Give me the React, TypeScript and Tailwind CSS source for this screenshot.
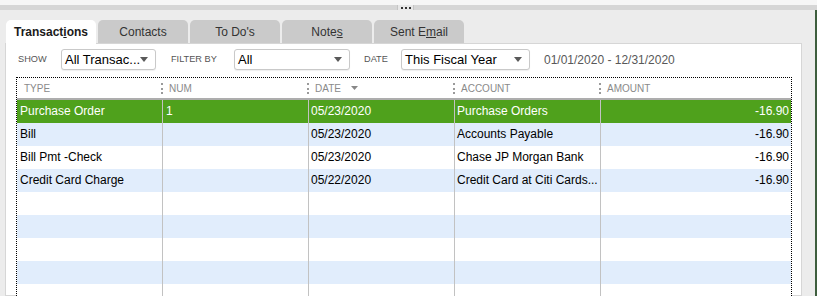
import type { ReactNode } from 'react';

const font = { fontFamily: '"Liberation Sans", Arial, sans-serif' };

type Row = { type: string; num: string; date: string; account: string; amount: string };

const rows: Row[] = [
  { type: 'Purchase Order', num: '1', date: '05/23/2020', account: 'Purchase Orders', amount: '-16.90' },
  { type: 'Bill', num: '', date: '05/23/2020', account: 'Accounts Payable', amount: '-16.90' },
  { type: 'Bill Pmt -Check', num: '', date: '05/23/2020', account: 'Chase JP Morgan Bank', amount: '-16.90' },
  { type: 'Credit Card Charge', num: '', date: '05/22/2020', account: 'Credit Card at Citi Cards...', amount: '-16.90' },
  { type: '', num: '', date: '', account: '', amount: '' },
  { type: '', num: '', date: '', account: '', amount: '' },
  { type: '', num: '', date: '', account: '', amount: '' },
  { type: '', num: '', date: '', account: '', amount: '' },
  { type: '', num: '', date: '', account: '', amount: '' },
];

const Caret = () => (
  <svg width="8" height="5" viewBox="0 0 8 5" className="shrink-0">
    <path d="M0 0h8L4 5z" fill="#5a5a5a" />
  </svg>
);

const Select = ({ label, width }: { label: string; width: string }) => (
  <div
    className={`${width} h-[21px] shrink-0 flex items-center justify-between pl-[3px] pr-[7px] bg-white border border-[#c9c9c9] rounded-[3px] shadow-[0_1px_1px_rgba(0,0,0,0.07)] text-[13px] text-black`}
  >
    <span className="whitespace-nowrap">{label}</span>
    <Caret />
  </div>
);

const Label = ({ children, width }: { children: ReactNode; width: string }) => (
  <span className={`${width} shrink-0 text-[9.2px] text-[#555] uppercase whitespace-nowrap`}>{children}</span>
);

const Grip = () => <div className="w-[2px] h-[11px] border-l-2 border-dotted border-[#9a9a9a]" />;

const Tab = ({ children, active }: { children: ReactNode; active?: boolean }) => (
  <div
    className={`w-[90px] rounded-t-[5px] flex items-center justify-center text-[12px] ${
      active ? 'bg-white font-bold text-[#1a1a1a] relative z-10 -mb-px h-[24px]' : 'bg-[#cacaca] text-[#333] h-[23px]'
    }`}
  >
    {children}
  </div>
);

export default function App() {
  return (
    <div className="w-[817px] h-[296px] overflow-hidden bg-[#ececec] flex flex-col" style={font}>
      <div className="h-[5px] bg-[#f6f6f6] shrink-0" />
      <div className="h-[5px] bg-[#d6d6d6] shrink-0 flex">
        <div className="ml-[397px] w-[17px] h-full bg-[#e8e8e8] border-x border-[#c4c4c4] flex items-center justify-center gap-[2px]">
          <span className="w-[2px] h-[2px] bg-[#333]" />
          <span className="w-[2px] h-[2px] bg-[#333]" />
          <span className="w-[2px] h-[2px] bg-[#333]" />
        </div>
      </div>
      <div className="flex flex-1 min-h-0">
        <div className="flex-1 pt-[10px] pl-[5px] pr-[13px] flex flex-col">
          <div className="flex gap-[2px] pl-[1px] h-[23px] shrink-0">
            <Tab active>
              Transact<span className="underline">i</span>ons
            </Tab>
            <Tab>Contacts</Tab>
            <Tab>To Do's</Tab>
            <Tab>
              Note<span className="underline">s</span>
            </Tab>
            <Tab>
              Sent E<span className="underline">m</span>ail
            </Tab>
          </div>
          <div className="flex-1 min-h-0 bg-white border border-[#d6d6d6] pt-[5px] flex flex-col">
            <div className="flex items-center pl-[12px] h-[21px] shrink-0">
              <Label width="w-[43px]">Show</Label>
              <Select label="All Transac..." width="w-[95px]" />
              <span className="w-[15px] shrink-0" />
              <Label width="w-[63px]">Filter by</Label>
              <Select label="All" width="w-[116px]" />
              <span className="w-[14px] shrink-0" />
              <Label width="w-[37px]">Date</Label>
              <Select label="This Fiscal Year" width="w-[129px]" />
              <span className="ml-[14px] text-[12px] text-[#585858] whitespace-nowrap">01/01/2020 - 12/31/2020</span>
            </div>
            <div className="mt-[7px] ml-[10px] w-[776px] flex-1 shrink-0 border border-dotted border-black text-[12px]">
              <div className="grid grid-cols-[146px_146px_146px_146px_1fr] h-[22px] border-b-2 border-[#adadad] text-[10px] text-[#8a8a8a] uppercase">
                <div className="flex items-center justify-between pl-[7px]">
                  <span>Type</span>
                  <Grip />
                </div>
                <div className="flex items-center justify-between pl-[6px]">
                  <span>Num</span>
                  <Grip />
                </div>
                <div className="flex items-center justify-between pl-[6px]">
                  <span className="flex items-center gap-[10px]">
                    Date
                    <svg width="7" height="4" viewBox="0 0 7 4">
                      <path d="M0 0h7L3.5 4z" fill="#888" />
                    </svg>
                  </span>
                  <Grip />
                </div>
                <div className="flex items-center justify-between pl-[6px]">
                  <span>Account</span>
                  <Grip />
                </div>
                <div className="flex items-center pl-[6px]">
                  <span>Amount</span>
                </div>
              </div>
              {rows.map((r, i) => {
                const bg = i === 0 ? 'bg-[#4fa11c] text-white' : i % 2 === 1 ? 'bg-[#e1edfc] text-black' : 'bg-white text-black';
                return (
                  <div key={i} className={`grid grid-cols-[146px_146px_146px_146px_1fr] h-[23px] leading-[23px] ${bg}`}>
                    <div className="border-r border-[#c2c2c2] pl-[3px] whitespace-nowrap overflow-hidden">{r.type}</div>
                    <div className="border-r border-[#c2c2c2] pl-[3px]">{r.num}</div>
                    <div className="border-r border-[#c2c2c2] pl-[2px]">{r.date}</div>
                    <div className="border-r border-[#c2c2c2] pl-[2px] whitespace-nowrap overflow-hidden">{r.account}</div>
                    <div className="pr-[2px] text-right">{r.amount}</div>
                  </div>
                );
              })}
            </div>
          </div>
        </div>
        <div className="w-[2px] bg-[#3e5e3e]" />
      </div>
    </div>
  );
}
